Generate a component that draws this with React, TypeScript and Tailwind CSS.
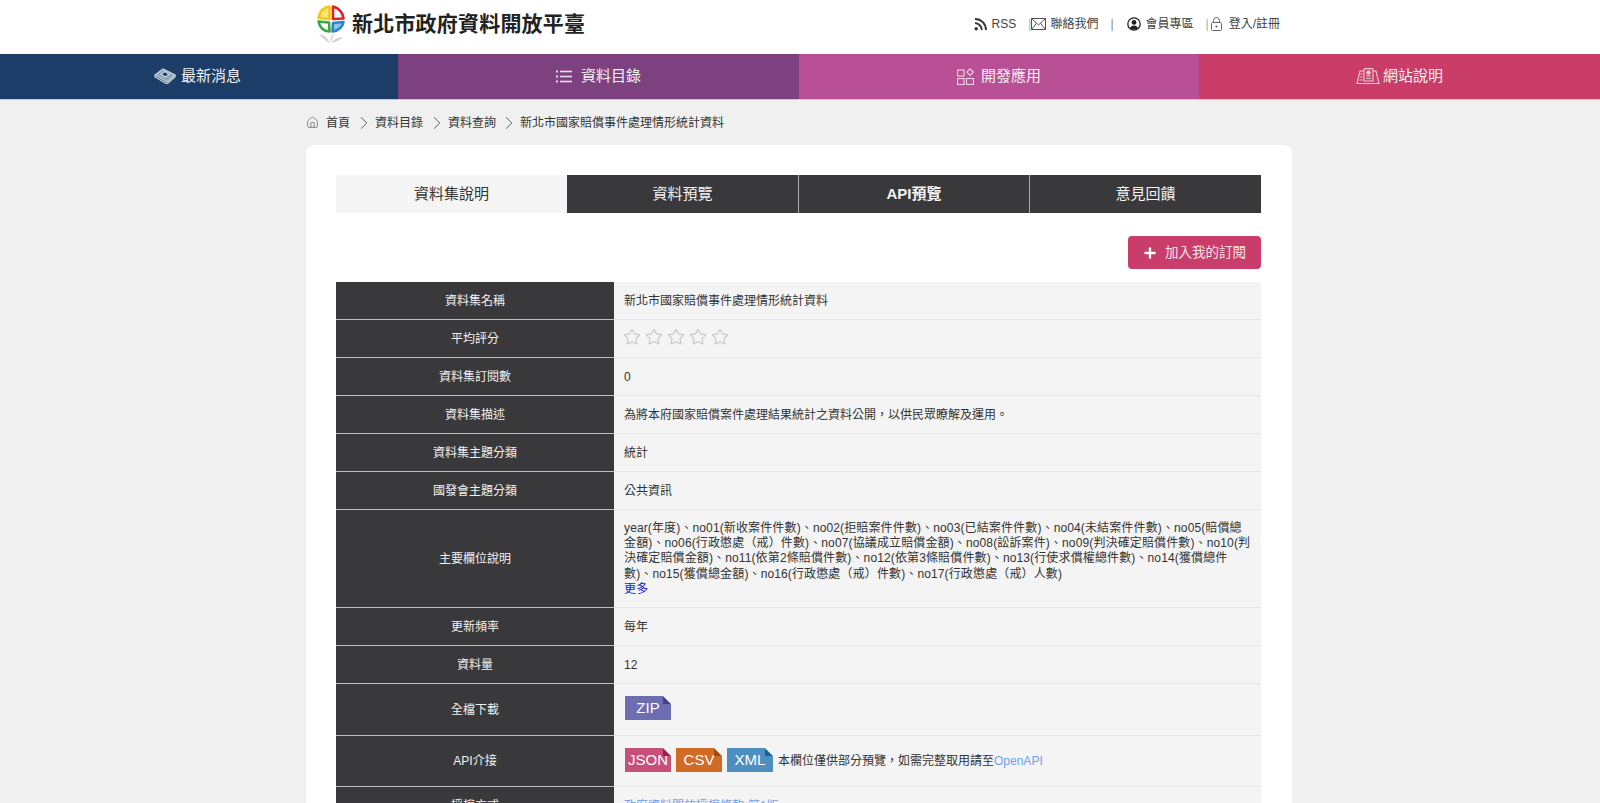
import React from "react";
import { Star, Plus, Home, ChevronRight } from "lucide-react";

const font = { fontFamily: '"Liberation Sans","Noto Sans CJK TC",sans-serif' };

function Logo() {
  return (
    <svg width="28" height="39" viewBox="0 0 28 39" className="shrink-0">
      <path d="M12.5 1.5 Q3.5 2.5 1.5 13 L12.5 14 Z" fill="#fbe27a" stroke="#f3c614" strokeWidth="2.6" strokeLinejoin="round" />
      <path d="M16 1.5 Q25 4 26.5 13.5 L16 14 Z" fill="#fff" stroke="#d9232e" strokeWidth="2.6" strokeLinejoin="round" />
      <path d="M1.5 16.5 L12 17.5 L12.5 26.5 Q3.5 26 1.5 16.5 Z" fill="#fff" stroke="#3aa545" strokeWidth="2.6" strokeLinejoin="round" />
      <path d="M16 18 L26.5 17 Q25 25 15.5 26.5 Z" fill="#8cc4ec" stroke="#2b86c8" strokeWidth="2.6" strokeLinejoin="round" />
      <path d="M2 29 Q9 30 13 38 Q8 36 2 29 Z M13 38 Q14 32 16 28 Q17 33 13 38 Z M14 38 Q19 32 26 32 Q21 37 14 38 Z" fill="#d2d2d2" />
    </svg>
  );
}

function RssIcon() {
  return (
    <svg width="13" height="13" viewBox="0 0 13 13" fill="none" stroke="#333" strokeWidth="1.8" className="shrink-0">
      <circle cx="2.2" cy="10.8" r="1.7" fill="#333" stroke="none" />
      <path d="M1 5.2 A7 7 0 0 1 7.8 12" />
      <path d="M1 1 A11 11 0 0 1 12 12" />
    </svg>
  );
}

function MailIcon() {
  return (
    <svg width="15" height="12" viewBox="0 0 15 12" fill="none" stroke="#555" strokeWidth="1" className="shrink-0">
      <rect x="0.5" y="0.5" width="14" height="11" />
      <path d="M0.5 0.5 L7.5 7 L14.5 0.5 M0.5 11.5 L5.5 5.2 M14.5 11.5 L9.5 5.2" />
    </svg>
  );
}

function UserIcon() {
  return (
    <svg width="14" height="14" viewBox="0 0 14 14" className="shrink-0">
      <circle cx="7" cy="7" r="6.2" fill="none" stroke="#222" strokeWidth="1.3" />
      <circle cx="7" cy="5.4" r="2.4" fill="#222" />
      <path d="M2.8 11.4 Q4 8.4 7 8.4 Q10 8.4 11.2 11.4 Q7 14.2 2.8 11.4 Z" fill="#222" />
    </svg>
  );
}

function LockIcon() {
  return (
    <svg width="11" height="14" viewBox="0 0 11 14" fill="none" stroke="#666" strokeWidth="1" className="shrink-0">
      <rect x="0.5" y="5.5" width="10" height="8" rx="1" />
      <path d="M2.5 5.5 V3.5 A3 3 0 0 1 8.5 3.5 V5.5" />
      <circle cx="5.5" cy="9.5" r="1.1" fill="#666" stroke="none" />
    </svg>
  );
}

function BookIcon() {
  return (
    <svg width="22" height="16" viewBox="0 0 22 16" fill="none" stroke="#c8d3df" strokeWidth="1.2">
      <path d="M1 7 L9 1 L21 7 L13 14 Z" fill="#8fa3b9" />
      <path d="M1 7 V9 L13 16 L21 9 V7" />
      <path d="M7 6 L11 3.5 L15 6.5 L11 9 Z" fill="#1d3d69" />
    </svg>
  );
}

function ListIcon() {
  return (
    <svg width="16" height="13" viewBox="0 0 16 13" fill="#eadcec">
      <rect x="0" y="0.5" width="2" height="2" />
      <rect x="0" y="5.5" width="2" height="2" />
      <rect x="0" y="10.5" width="2" height="2" />
      <rect x="4" y="0.7" width="12" height="1.6" />
      <rect x="4" y="5.7" width="12" height="1.6" />
      <rect x="4" y="10.7" width="12" height="1.6" />
    </svg>
  );
}

function AppsIcon() {
  return (
    <svg width="17" height="17" viewBox="0 0 17 17" fill="none" stroke="#f3d3e6" strokeWidth="1.1">
      <rect x="0.6" y="2" width="6.5" height="6" />
      <rect x="0.6" y="10.5" width="6.5" height="6" />
      <rect x="9.5" y="10.5" width="7" height="6" />
      <path d="M10 4 L13 1 L16.4 4 L13 7.5 Z" />
    </svg>
  );
}

function GuideIcon() {
  return (
    <svg width="24" height="17" viewBox="0 0 24 17" fill="none" stroke="#f3c9d6" strokeWidth="1.1">
      <path d="M8 3 H4 L1 15.5 H23 L20 3 H17" />
      <path d="M8 13 V2 Q8 0.6 9.5 0.6 H15.5 Q17 0.6 17 2 V13 Z" />
      <circle cx="12.5" cy="4.5" r="1.8" fill="#f3c9d6" />
      <path d="M10 8 H15 M10 10.5 H15 M4.5 6 H6.5 M4 9 H6.5 M3.6 12 H6.5" />
    </svg>
  );
}

function Badge({ label, color, fold, up }: { label: string; color: string; fold: string; up: string }) {
  return (
    <span className={`relative inline-flex h-[24px] w-[46px] items-center justify-center pb-[1px] text-[15px] leading-none text-white ${up}`} style={{ backgroundColor: color }}>
      {label}
      <svg width="8" height="8" viewBox="0 0 8 8" className="absolute right-0 top-0">
        <path d="M0 0 L8 8 H0 Z" fill={fold} />
        <path d="M0 0 H8 V8 Z" fill="#f4f4f4" />
      </svg>
    </span>
  );
}

function Row({ label, h, children }: { label: string; h: string; children: React.ReactNode }) {
  return (
    <div className={`flex ${h}`}>
      <div className="flex w-[278px] shrink-0 items-center justify-center border-b border-[#bdbdbd] bg-[#39393b] text-[12px] text-[#f2f2f2]">{label}</div>
      <div className="flex min-w-0 flex-1 items-center border-b border-[#e8e8e8] bg-[#f4f4f4] pl-[10px] pr-[12px] text-[12px] text-[#333]">{children}</div>
    </div>
  );
}

const nav = [
  { t: "最新消息", bg: "bg-[#1d3d69]", w: "w-[398px]", icon: <BookIcon />, gap: "gap-[5px]", off: "pr-[3px]" },
  { t: "資料目錄", bg: "bg-[#7e4180]", w: "w-[401px]", icon: <ListIcon />, gap: "gap-[9px]", off: "" },
  { t: "開發應用", bg: "bg-[#b95096]", w: "w-[400px]", icon: <AppsIcon />, gap: "gap-[7px]", off: "" },
  { t: "網站說明", bg: "bg-[#c93d68]", w: "w-[401px]", icon: <GuideIcon />, gap: "gap-[3px]", off: "" },
];

export default function App() {
  return (
    <div className="h-[803px] overflow-hidden bg-[#f0f0f0]" style={font}>
      <header className="flex h-[54px] items-center bg-white pb-[6px]">
        <div className="flex items-center pl-[317px]">
          <Logo />
          <span className="ml-[7px] text-[21px] font-bold tracking-[0.2px] text-[#222]">新北市政府資料開放平臺</span>
        </div>
        <div className="ml-auto flex items-center pr-[320px] text-[12px] text-[#444]">
          <RssIcon />
          <span className="ml-[5px]">RSS</span>
          <span className="ml-[12px] text-[#aaa]">|</span>
          <MailIcon />
          <span className="ml-[4px]">聯絡我們</span>
          <span className="ml-[12px] text-[#888]">|</span>
          <span className="ml-[13px] flex"><UserIcon /></span>
          <span className="ml-[5px]">會員專區</span>
          <span className="ml-[12px] text-[#aaa]">|</span>
          <span className="ml-[2px] flex"><LockIcon /></span>
          <span className="ml-[7px]">登入/註冊</span>
        </div>
      </header>

      <nav className="flex h-[46px] border-b border-[#c9c9d6]">
        {nav.map((n) => (
          <a key={n.t} className={`flex items-center justify-center pb-[1px] ${n.bg} ${n.w} ${n.gap} ${n.off} text-[15px] text-[#f2f2f2]`}>
            {n.icon}
            <span>{n.t}</span>
          </a>
        ))}
      </nav>

      <div className="flex h-[45px] items-center pl-[306px] text-[12px] text-[#333]">
        <Home size={13} strokeWidth={1.2} className="text-[#555]" />
        <span className="ml-[7px]">首頁</span>
        <ChevronRight size={22} strokeWidth={1} className="ml-[3px] text-[#555]" />
        <span>資料目錄</span>
        <ChevronRight size={22} strokeWidth={1} className="ml-[3px] text-[#555]" />
        <span>資料查詢</span>
        <ChevronRight size={22} strokeWidth={1} className="ml-[2px] text-[#555]" />
        <span>新北市國家賠償事件處理情形統計資料</span>
      </div>

      <main className="ml-[306px] w-[986px] rounded-t-[8px] bg-white px-[30px] pt-[30px]">
        <div className="flex h-[38px] w-[925px] text-[15px]">
          <div className="flex w-[231px] items-center justify-center bg-[#f5f5f5] text-[#333]">資料集說明</div>
          <div className="flex w-[232px] items-center justify-center border-r border-[#aaa] bg-[#39393b] text-[#f2f2f2]">資料預覽</div>
          <div className="flex w-[231px] items-center justify-center border-r border-[#aaa] bg-[#39393b] font-semibold text-[#f2f2f2]">API預覽</div>
          <div className="flex w-[231px] items-center justify-center bg-[#39393b] text-[#f2f2f2]">意見回饋</div>
        </div>

        <div className="mt-[23px] flex w-[925px] justify-end">
          <button className="flex h-[33px] w-[133px] items-center justify-center gap-[7px] rounded-[4px] bg-[#c93d6a] pt-[1px] pr-[1px] text-[13.5px] text-[#f6e3ea]">
            <Plus size={16} strokeWidth={3.4} className="text-white" />
            加入我的訂閱
          </button>
        </div>

        <div className="mt-[13px] w-[925px]">
          <Row label="資料集名稱" h="h-[38px]">新北市國家賠償事件處理情形統計資料</Row>
          <Row label="平均評分" h="h-[38px]">
            <div className="mb-[3px] -ml-[1px] flex gap-[4px] text-[#c6c6c6]">
              {[0, 1, 2, 3, 4].map((i) => (
                <Star key={i} size={18} strokeWidth={1.5} />
              ))}
            </div>
          </Row>
          <Row label="資料集訂閱數" h="h-[38px]">0</Row>
          <Row label="資料集描述" h="h-[38px]">為將本府國家賠償案件處理結果統計之資料公開，以供民眾瞭解及運用。</Row>
          <Row label="資料集主題分類" h="h-[38px]">統計</Row>
          <Row label="國發會主題分類" h="h-[38px]">公共資訊</Row>
          <Row label="主要欄位說明" h="h-[98px]">
            <div className="pt-[1px] leading-[15.2px] tracking-[0.13px] whitespace-nowrap">
              <div>
                year(年度)、no01(新收案件件數)、no02(拒賠案件件數)、no03(已結案件件數)、no04(未結案件件數)、no05(賠償總
                <br />
                金額)、no06(行政懲處（戒）件數)、no07(協議成立賠償金額)、no08(訟訴案件)、no09(判決確定賠償件數)、no10(判
                <br />
                決確定賠償金額)、no11(依第2條賠償件數)、no12(依第3條賠償件數)、no13(行使求償權總件數)、no14(獲償總件
                <br />
                數)、no15(獲償總金額)、no16(行政懲處（戒）件數)、no17(行政懲處（戒）人數)
              </div>
              <a className="text-[#2222dd]">更多</a>
            </div>
          </Row>
          <Row label="更新頻率" h="h-[38px]">每年</Row>
          <Row label="資料量" h="h-[38px]">12</Row>
          <Row label="全檔下載" h="h-[52px]">
            <span className="ml-[1px] flex">
              <Badge label="ZIP" color="#6d6db1" fold="#3f3f91" up="mb-[4px]" />
            </span>
          </Row>
          <Row label="API介接" h="h-[51px]">
            <div className="ml-[1px] flex items-center gap-[5px]">
              <Badge label="JSON" color="#c74f78" fold="#99204a" up="mb-[2px]" />
              <Badge label="CSV" color="#d06a24" fold="#a14a10" up="mb-[2px]" />
              <Badge label="XML" color="#4f8fc0" fold="#1c6590" up="mb-[2px]" />
              <span>本欄位僅供部分預覽，如需完整取用請至<a className="text-[#6fa0ee]">OpenAPI</a></span>
            </div>
          </Row>
          <Row label="授權方式" h="h-[38px]">
            <a className="text-[#6fa0ee]">政府資料開放授權條款-第1版</a>
          </Row>
        </div>
      </main>
    </div>
  );
}
